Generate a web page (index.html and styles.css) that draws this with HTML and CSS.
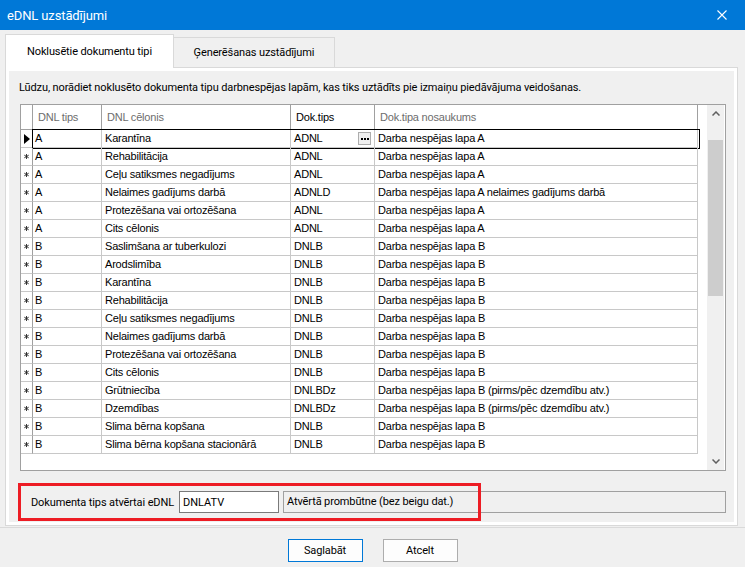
FILE: index.html
```html
<!DOCTYPE html>
<html lang="lv">
<head>
  <meta charset="UTF-8">
  <title>eDNL uzstādījumi</title>
  <link rel="stylesheet" href="styles.css">
</head>
<body>
  <svg class="defs" width="0" height="0">
    <symbol id="star" viewBox="0 0 5 5">
      <path d="M2.5 0V5M0.3 1.2L4.7 3.8M0.3 3.8L4.7 1.2" stroke="#222" stroke-width="0.9"/>
    </symbol>
  </svg>

  <div class="window">
    <div class="titlebar">
      <span class="title">eDNL uzstādījumi</span>
      <span class="close">
        <svg width="10" height="10" viewBox="0 0 10 10"><path d="M0.5 0.5L9.5 9.5M9.5 0.5L0.5 9.5" stroke="#fff" stroke-width="1.1"/></svg>
      </span>
    </div>

    <div class="tabstrip">
      <div class="tab active">Noklusētie dokumentu tipi</div>
      <div class="tab">Ģenerēšanas uzstādījumi</div>
    </div>

    <div class="tabpanel">
      <div class="page">
        <p class="intro">Lūdzu, norādiet noklusēto dokumenta tipu darbnespējas lapām, kas tiks uztādīts pie izmaiņu piedāvājuma veidošanas.</p>

        <div class="grid">
          <div class="grid-body">
            <div class="row head">
              <div class="cell ind"></div>
              <div class="cell">DNL tips</div>
              <div class="cell">DNL cēlonis</div>
              <div class="cell dark">Dok.tips</div>
              <div class="cell">Dok.tipa nosaukums</div>
            </div>

            <div class="row current">
              <div class="cell ind"><svg width="6" height="10" viewBox="0 0 6 10"><path d="M0 0L6 5L0 10Z" fill="#000"/></svg></div>
              <div class="cell">A</div>
              <div class="cell">Karantīna</div>
              <div class="cell editing">ADNL<span class="dots"><i></i><i></i><i></i></span></div>
              <div class="cell">Darba nespējas lapa A</div>
            </div>
            <div class="row">
              <div class="cell ind"><svg class="star"><use href="#star"/></svg></div>
              <div class="cell">A</div>
              <div class="cell">Rehabilitācija</div>
              <div class="cell">ADNL</div>
              <div class="cell">Darba nespējas lapa A</div>
            </div>
            <div class="row">
              <div class="cell ind"><svg class="star"><use href="#star"/></svg></div>
              <div class="cell">A</div>
              <div class="cell">Ceļu satiksmes negadījums</div>
              <div class="cell">ADNL</div>
              <div class="cell">Darba nespējas lapa A</div>
            </div>
            <div class="row">
              <div class="cell ind"><svg class="star"><use href="#star"/></svg></div>
              <div class="cell">A</div>
              <div class="cell">Nelaimes gadījums darbā</div>
              <div class="cell">ADNLD</div>
              <div class="cell">Darba nespējas lapa A nelaimes gadījums darbā</div>
            </div>
            <div class="row">
              <div class="cell ind"><svg class="star"><use href="#star"/></svg></div>
              <div class="cell">A</div>
              <div class="cell">Protezēšana vai ortozēšana</div>
              <div class="cell">ADNL</div>
              <div class="cell">Darba nespējas lapa A</div>
            </div>
            <div class="row">
              <div class="cell ind"><svg class="star"><use href="#star"/></svg></div>
              <div class="cell">A</div>
              <div class="cell">Cits cēlonis</div>
              <div class="cell">ADNL</div>
              <div class="cell">Darba nespējas lapa A</div>
            </div>
            <div class="row">
              <div class="cell ind"><svg class="star"><use href="#star"/></svg></div>
              <div class="cell">B</div>
              <div class="cell">Saslimšana ar tuberkulozi</div>
              <div class="cell">DNLB</div>
              <div class="cell">Darba nespējas lapa B</div>
            </div>
            <div class="row">
              <div class="cell ind"><svg class="star"><use href="#star"/></svg></div>
              <div class="cell">B</div>
              <div class="cell">Arodslimība</div>
              <div class="cell">DNLB</div>
              <div class="cell">Darba nespējas lapa B</div>
            </div>
            <div class="row">
              <div class="cell ind"><svg class="star"><use href="#star"/></svg></div>
              <div class="cell">B</div>
              <div class="cell">Karantīna</div>
              <div class="cell">DNLB</div>
              <div class="cell">Darba nespējas lapa B</div>
            </div>
            <div class="row">
              <div class="cell ind"><svg class="star"><use href="#star"/></svg></div>
              <div class="cell">B</div>
              <div class="cell">Rehabilitācija</div>
              <div class="cell">DNLB</div>
              <div class="cell">Darba nespējas lapa B</div>
            </div>
            <div class="row">
              <div class="cell ind"><svg class="star"><use href="#star"/></svg></div>
              <div class="cell">B</div>
              <div class="cell">Ceļu satiksmes negadījums</div>
              <div class="cell">DNLB</div>
              <div class="cell">Darba nespējas lapa B</div>
            </div>
            <div class="row">
              <div class="cell ind"><svg class="star"><use href="#star"/></svg></div>
              <div class="cell">B</div>
              <div class="cell">Nelaimes gadījums darbā</div>
              <div class="cell">DNLB</div>
              <div class="cell">Darba nespējas lapa B</div>
            </div>
            <div class="row">
              <div class="cell ind"><svg class="star"><use href="#star"/></svg></div>
              <div class="cell">B</div>
              <div class="cell">Protezēšana vai ortozēšana</div>
              <div class="cell">DNLB</div>
              <div class="cell">Darba nespējas lapa B</div>
            </div>
            <div class="row">
              <div class="cell ind"><svg class="star"><use href="#star"/></svg></div>
              <div class="cell">B</div>
              <div class="cell">Cits cēlonis</div>
              <div class="cell">DNLB</div>
              <div class="cell">Darba nespējas lapa B</div>
            </div>
            <div class="row">
              <div class="cell ind"><svg class="star"><use href="#star"/></svg></div>
              <div class="cell">B</div>
              <div class="cell">Grūtniecība</div>
              <div class="cell">DNLBDz</div>
              <div class="cell">Darba nespējas lapa B (pirms/pēc dzemdību atv.)</div>
            </div>
            <div class="row">
              <div class="cell ind"><svg class="star"><use href="#star"/></svg></div>
              <div class="cell">B</div>
              <div class="cell">Dzemdības</div>
              <div class="cell">DNLBDz</div>
              <div class="cell">Darba nespējas lapa B (pirms/pēc dzemdību atv.)</div>
            </div>
            <div class="row">
              <div class="cell ind"><svg class="star"><use href="#star"/></svg></div>
              <div class="cell">B</div>
              <div class="cell">Slima bērna kopšana</div>
              <div class="cell">DNLB</div>
              <div class="cell">Darba nespējas lapa B</div>
            </div>
            <div class="row">
              <div class="cell ind"><svg class="star"><use href="#star"/></svg></div>
              <div class="cell">B</div>
              <div class="cell">Slima bērna kopšana stacionārā</div>
              <div class="cell">DNLB</div>
              <div class="cell">Darba nespējas lapa B</div>
            </div>
          </div>

          <div class="vscroll">
            <span class="arrow">
              <svg width="8" height="5" viewBox="0 0 8 5"><path d="M0.5 4.5L4 1L7.5 4.5" fill="none" stroke="#606060" stroke-width="1.5"/></svg>
            </span>
            <div class="track"><div class="thumb"></div></div>
            <span class="arrow">
              <svg width="8" height="5" viewBox="0 0 8 5"><path d="M0.5 0.5L4 4L7.5 0.5" fill="none" stroke="#606060" stroke-width="1.5"/></svg>
            </span>
          </div>
        </div>

        <div class="open-row">
          <label class="open-label" for="openType">Dokumenta tips atvērtai eDNL</label>
          <input class="open-input" id="openType" type="text" value="DNLATV">
          <div class="open-name">Atvērtā prombūtne (bez beigu dat.)</div>
        </div>

        <div class="highlight"></div>
      </div>
    </div>

    <div class="footer">
      <button class="btn default">Saglabāt</button>
      <button class="btn">Atcelt</button>
    </div>
  </div>
</body>
</html>
```

FILE: styles.css
```css
body {
  margin: 0;
  background-color: #f0f0f0;
  font-family: Roboto, 'Noto Sans', sans-serif;
  font-size: 11px;
  letter-spacing: -0.12px;
  color: #000;
}
.defs {
  position: absolute;
}
.window {
  width: 745px;
  height: 567px;
  overflow: hidden;
}
.titlebar {
  height: 30px;
  background-color: #0078d7;
  color: #fff;
  display: flex;
  align-items: center;
  justify-content: space-between;
}
.title {
  padding-left: 7px;
  font-size: 13px;
}
.close {
  width: 46px;
  height: 30px;
  display: flex;
  align-items: center;
  justify-content: center;
}
.tabstrip {
  display: flex;
  align-items: flex-end;
  height: 33px;
  margin: 4px 0 0 5px;
}
.tab {
  box-sizing: border-box;
  height: 30px;
  width: 162px;
  margin-left: -1px;
  border: 1px solid #d9d9d9;
  border-bottom: none;
  background-color: #f0f0f0;
  display: flex;
  align-items: center;
  justify-content: center;
}
.tab.active {
  position: relative;
  z-index: 1;
  width: 169px;
  height: 34px;
  margin-left: 0;
  margin-bottom: -1px;
  background-color: #fff;
}
.tabpanel {
  box-sizing: border-box;
  width: 733px;
  height: 459px;
  margin-left: 5px;
  padding: 3px;
  border: 1px solid #d9d9d9;
  background-color: #fff;
}
.page {
  position: relative;
  height: 100%;
  background-color: #f0f0f0;
  display: flex;
  flex-direction: column;
}
.intro {
  margin: 10px 0 0 10px;
  line-height: 14px;
}
.grid {
  box-sizing: border-box;
  width: 706px;
  height: 367px;
  margin: 9px 0 0 11px;
  border: 1px solid #a0a0a0;
  background-color: #fff;
  display: flex;
  font-family: 'Liberation Sans', Arial, sans-serif;
  font-size: 11px;
  letter-spacing: -0.2px;
}
.grid-body {
  flex: 1;
}
.row {
  position: relative;
  display: grid;
  grid-template-columns: 12px 69px 189px 84px 323px;
  height: 18px;
}
.cell {
  box-sizing: border-box;
  border-right: 1px solid #c8c8c8;
  border-bottom: 1px solid #c8c8c8;
  padding: 0 3px;
  line-height: 17px;
  white-space: nowrap;
  overflow: hidden;
}
.cell:nth-child(2) {
  padding-left: 2px;
}
.cell.ind {
  padding: 0;
  display: flex;
  align-items: center;
  justify-content: center;
  border-right-color: #a0a0a0;
}
.star {
  width: 5px;
  height: 5px;
}
.row.head {
  height: 25px;
}
.row.head .cell {
  color: #6d6d6d;
  line-height: 24px;
  padding-left: 5px;
  border-right-color: #a0a0a0;
  border-bottom-color: #a0a0a0;
}
.row.head .cell.dark {
  color: #000;
}
.row.current::after {
  content: '';
  position: absolute;
  left: 11px;
  top: -1px;
  width: 666px;
  height: 18px;
  border: 1px solid #000;
  pointer-events: none;
}
.cell.editing {
  display: flex;
  align-items: center;
  justify-content: space-between;
  padding-right: 3px;
}
.dots {
  box-sizing: border-box;
  width: 13px;
  height: 13px;
  border: 1px solid #adadad;
  background-color: #f0f0f0;
  display: flex;
  align-items: center;
  justify-content: center;
  gap: 1px;
}
.dots i {
  width: 2px;
  height: 2px;
  background-color: #000;
}
.vscroll {
  width: 17px;
  display: flex;
  flex-direction: column;
  background-color: #f0f0f0;
  border-right: 1px solid #fff;
}
.arrow {
  height: 17px;
  display: flex;
  align-items: center;
  justify-content: center;
}
.track {
  flex: 1;
  padding-top: 18px;
}
.thumb {
  width: 15px;
  height: 156px;
  margin-left: 1px;
  background-color: #cdcdcd;
}
.open-row {
  display: flex;
  align-items: center;
  height: 22px;
  margin-top: 20px;
  padding-left: 22px;
}
.open-label {
  width: 148px;
  white-space: nowrap;
}
.open-input {
  box-sizing: border-box;
  width: 100px;
  height: 22px;
  margin: 0 4px 0 0;
  padding: 0 3px;
  border: 1px solid #7a7a7a;
  background-color: #fff;
  font: inherit;
  color: #000;
}
.open-name {
  box-sizing: border-box;
  width: 443px;
  height: 22px;
  padding: 0 3px;
  line-height: 20px;
  border: 1px solid #a0a0a0;
  background-color: #f0f0f0;
}
.highlight {
  position: absolute;
  left: 9px;
  top: 412px;
  width: 463px;
  height: 38px;
  box-sizing: border-box;
  border: 3px solid #ed1c24;
  pointer-events: none;
}
.footer {
  margin-top: 1px;
  border-top: 1px solid #dadada;
  padding-top: 11px;
  display: flex;
  justify-content: center;
  gap: 20px;
}
.btn {
  box-sizing: border-box;
  width: 75px;
  height: 23px;
  border: 1px solid #adadad;
  background-color: #fdfdfd;
  font-family: Roboto, 'Noto Sans', sans-serif;
  font-size: 11px;
  letter-spacing: -0.12px;
  color: #000;
  padding: 0;
}
.btn.default {
  border: 1px solid #0078d7;
}
```
